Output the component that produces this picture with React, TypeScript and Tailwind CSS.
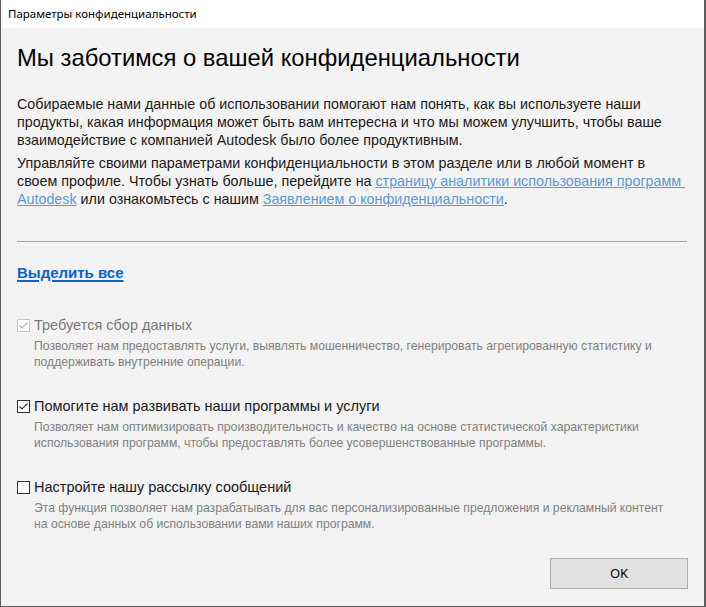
import React from "react";

const sans = { fontFamily: '"Liberation Sans", Arial, sans-serif' };

function Box({ state }: { state: "disabled" | "checked" | "empty" }) {
  const border = state === "disabled" ? "#c4c4c4" : "#333333";
  const tick = state === "disabled" ? "#b0b0b0" : "#333333";
  return (
    <svg width="13" height="13" viewBox="0 0 13 13" className="shrink-0">
      <rect x="0.5" y="0.5" width="12" height="12" fill="#ffffff" stroke={border} />
      {state !== "empty" && (
        <path d="M2.5 6.5 L5 9 L10.5 3.5" fill="none" stroke={tick} strokeWidth="1.2" />
      )}
    </svg>
  );
}

function Item({
  state,
  label,
  desc,
}: {
  state: "disabled" | "checked" | "empty";
  label: string;
  desc: string[];
}) {
  return (
    <div className="flex flex-col">
      <div className="flex items-center gap-[4px] h-[20px]">
        <Box state={state} />
        <span
          className={`text-[14.5px] leading-[20px] whitespace-nowrap ${state === "disabled" ? "text-[#7a7a7a]" : "text-[#1a1a1a]"}`}
        >
          {label}
        </span>
      </div>
      <div className="pl-[17px] mt-[3px] text-[12.2px] leading-[16px] text-[#808080] whitespace-nowrap">
        {desc.map((d, i) => (
          <div key={i}>{d}</div>
        ))}
      </div>
    </div>
  );
}

export default function App() {
  return (
    <div className="w-[706px] h-[607px] flex flex-col bg-[#f3f3f3] border-l border-r-2 border-b border-[#5c5c5c] overflow-hidden">
      <div
        className="h-[28px] shrink-0 bg-white flex items-center pl-[7px] text-[11.5px] text-black"
        style={{ fontFamily: '"Noto Sans", "Liberation Sans", sans-serif' }}
      >
        Параметры конфиденциальности
      </div>
      <div className="flex flex-col flex-1 px-[16px]" style={sans}>
        <h1 className="mt-[14px] text-[23.8px] leading-[32px] text-black font-normal whitespace-nowrap">
          Мы заботимся о вашей конфиденциальности
        </h1>
        <p className="mt-[21px] text-[14.3px] leading-[18px] text-[#1a1a1a] whitespace-nowrap">
          Собираемые нами данные об использовании помогают нам понять, как вы используете наши
          <br />
          продукты, какая информация может быть вам интересна и что мы можем улучшить, чтобы ваше
          <br />
          взаимодействие с компанией Autodesk было более продуктивным.
        </p>
        <p className="mt-[5px] text-[14.3px] leading-[18px] text-[#1a1a1a] whitespace-nowrap">
          Управляйте своими параметрами конфиденциальности в этом разделе или в любой момент в
          <br />
          своем профиле. Чтобы узнать больше, перейдите на{" "}
          <span className="text-[#5a9ad6] underline">страницу аналитики использования программ&nbsp;</span>
          <br />
          <span className="text-[#5a9ad6] underline">Autodesk</span> или ознакомьтесь с нашим{" "}
          <span className="text-[#5a9ad6] underline">Заявлением о конфиденциальности</span>.
        </p>
        <div className="mt-[33px] h-[1px] bg-[#a0a0a0] mr-[1px] shrink-0" />
        <div className="mt-[21px] h-[20px] flex items-center">
          <span className="text-[15px] font-bold text-[#0a64c8] underline decoration-2 underline-offset-2">
            Выделить все
          </span>
        </div>
        <div className="mt-[32px] flex flex-col gap-[26px]">
          <Item
            state="disabled"
            label="Требуется сбор данных"
            desc={[
              "Позволяет нам предоставлять услуги, выявлять мошенничество, генерировать агрегированную статистику и",
              "поддерживать внутренние операции.",
            ]}
          />
          <Item
            state="checked"
            label="Помогите нам развивать наши программы и услуги"
            desc={[
              "Позволяет нам оптимизировать производительность и качество на основе статистической характеристики",
              "использования программ, чтобы предоставлять более усовершенствованные программы.",
            ]}
          />
          <Item
            state="empty"
            label="Настройте нашу рассылку сообщений"
            desc={[
              "Эта функция позволяет нам разрабатывать для вас персонализированные предложения и рекламный контент",
              "на основе данных об использовании вами наших программ.",
            ]}
          />
        </div>
        <div className="flex justify-end mt-[26px]">
          <button
            className="w-[138px] h-[31px] bg-[#e1e1e1] border border-[#adadad] text-[13px] text-black"
            style={{ fontFamily: '"Noto Sans", "Liberation Sans", sans-serif' }}
          >
            OK
          </button>
        </div>
      </div>
    </div>
  );
}
